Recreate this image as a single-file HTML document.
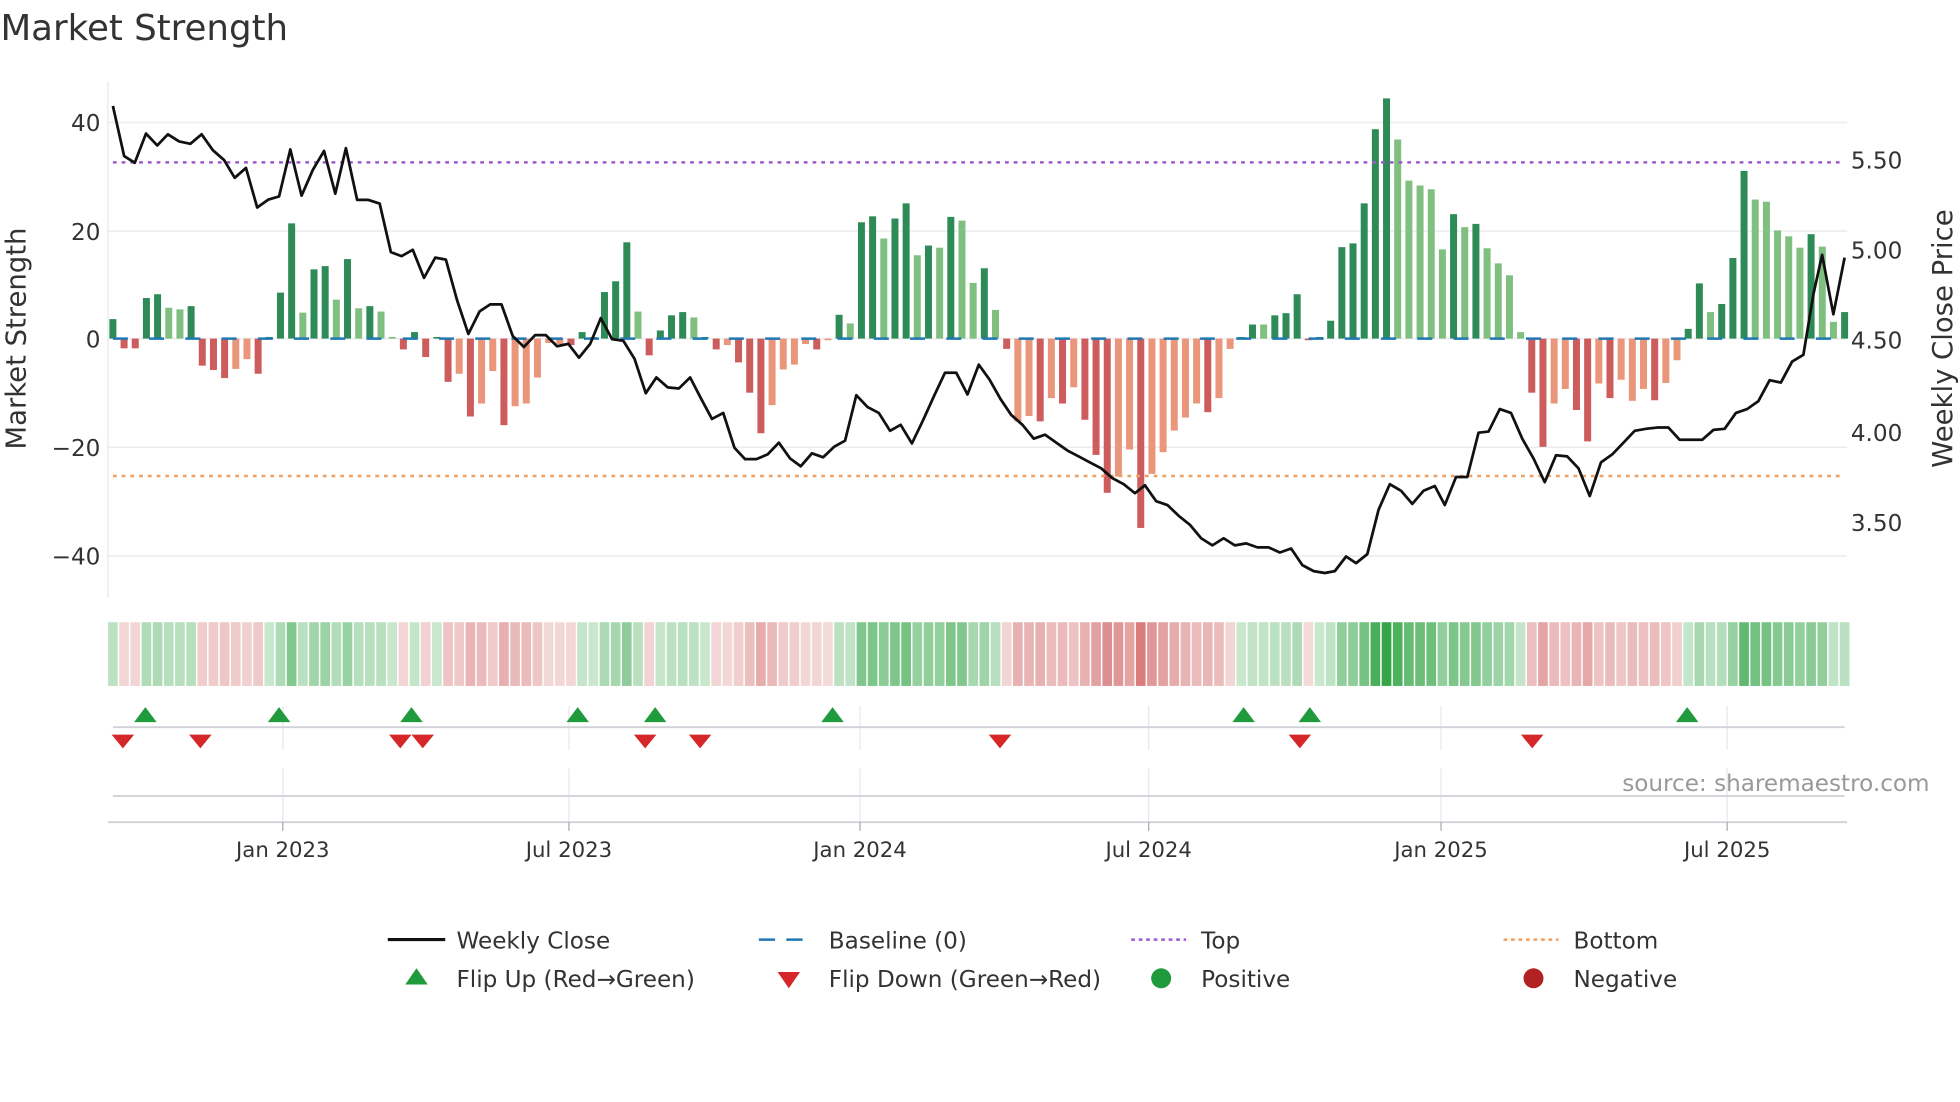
<!DOCTYPE html>
<html><head><meta charset="utf-8"><style>
html,body{margin:0;padding:0;background:#fff;width:1960px;height:1102px;overflow:hidden}
svg{display:block}
text{font-family:"DejaVu Sans","Liberation Sans",sans-serif;fill:#333}
</style></head><body>
<svg id="s" width="1960" height="1102" viewBox="0 0 1568 882" xmlns="http://www.w3.org/2000/svg">
<text x="0" y="32" font-size="28.5" fill="#333">Market Strength</text>
<g id="grid" stroke="#ececf0" stroke-width="1.2">
<line x1="86" x2="1478" y1="98" y2="98"/><line x1="86" x2="1478" y1="185" y2="185"/><line x1="86" x2="1478" y1="271" y2="271"/><line x1="86" x2="1478" y1="358" y2="358"/><line x1="86" x2="1478" y1="445" y2="445"/>
</g>
<line x1="86" x2="86" y1="65" y2="478" stroke="#ececf0" stroke-width="1.2"/>
<g font-size="18.5" text-anchor="end">
<text x="80" y="105">40</text><text x="80" y="192">20</text><text x="80" y="278">0</text><text x="80" y="365">−20</text><text x="80" y="452">−40</text>
</g>
<g font-size="18.5">
<text x="1481" y="135">5.50</text><text x="1481" y="207">5.00</text><text x="1481" y="279">4.50</text><text x="1481" y="353">4.00</text><text x="1481" y="425">3.50</text>
</g>
<text transform="translate(20,271) rotate(-90)" font-size="22" text-anchor="middle">Market Strength</text>
<text transform="translate(1562,271) rotate(-90)" font-size="22" text-anchor="middle">Weekly Close Price</text>
<g id="bars"></g>
<line x1="90" x2="1476" y1="271" y2="271" stroke="#1f77b4" stroke-width="2" stroke-dasharray="12,17"/>
<line x1="90" x2="1476" y1="130" y2="130" stroke="#9b59d0" stroke-width="2" stroke-dasharray="3,4"/>
<line x1="90" x2="1476" y1="381" y2="381" stroke="#f0a060" stroke-width="2" stroke-dasharray="3,4"/>
<polyline id="price" fill="none" stroke="#111" stroke-width="2.2" stroke-linejoin="round"/>
<g id="strip"></g>
<g stroke="#e6e8ee" stroke-width="1">
<line x1="226" x2="226" y1="565" y2="600"/><line x1="455" x2="455" y1="565" y2="600"/><line x1="688" x2="688" y1="565" y2="600"/><line x1="919" x2="919" y1="565" y2="600"/><line x1="1153" x2="1153" y1="565" y2="600"/><line x1="1382" x2="1382" y1="565" y2="600"/>
<line x1="226" x2="226" y1="615" y2="658"/><line x1="455" x2="455" y1="615" y2="658"/><line x1="688" x2="688" y1="615" y2="658"/><line x1="919" x2="919" y1="615" y2="658"/><line x1="1153" x2="1153" y1="615" y2="658"/><line x1="1382" x2="1382" y1="615" y2="658"/>
</g>
<line x1="90" x2="1476" y1="582" y2="582" stroke="#d0d2d8" stroke-width="1.5"/>
<line x1="90" x2="1476" y1="637" y2="637" stroke="#d0d2d8" stroke-width="1.5"/>
<line x1="86" x2="1478" y1="658" y2="658" stroke="#d0d2d8" stroke-width="1.5"/>
<g stroke="#aaa" stroke-width="1"><line x1="226" x2="226" y1="658" y2="665"/><line x1="455" x2="455" y1="658" y2="665"/><line x1="688" x2="688" y1="658" y2="665"/><line x1="919" x2="919" y1="658" y2="665"/><line x1="1153" x2="1153" y1="658" y2="665"/><line x1="1382" x2="1382" y1="658" y2="665"/></g>
<g id="tri"></g>
<text x="1544" y="633" font-size="18.5" text-anchor="end" style="fill:#999">source: sharemaestro.com</text>
<g font-size="17" text-anchor="middle">
<text x="226" y="686">Jan 2023</text><text x="455" y="686">Jul 2023</text><text x="688" y="686">Jan 2024</text><text x="919" y="686">Jul 2024</text><text x="1153" y="686">Jan 2025</text><text x="1382" y="686">Jul 2025</text>
</g>
<g font-size="18.5">
<line x1="310" x2="356" y1="752" y2="752" stroke="#111" stroke-width="2.5"/><text x="365" y="759">Weekly Close</text>
<line x1="607" x2="651" y1="752" y2="752" stroke="#1f77b4" stroke-width="2" stroke-dasharray="13,9"/><text x="663" y="759">Baseline (0)</text>
<line x1="905" x2="949" y1="752" y2="752" stroke="#9b59d0" stroke-width="2" stroke-dasharray="3,3"/><text x="961" y="759">Top</text>
<line x1="1203" x2="1247" y1="752" y2="752" stroke="#f0a060" stroke-width="2" stroke-dasharray="3,3"/><text x="1259" y="759">Bottom</text>
<polygon points="324,788 342,788 333,775" fill="#1f9a3c"/><text x="365" y="790">Flip Up (Red→Green)</text>
<polygon points="622,778 640,778 631,791" fill="#d62728"/><text x="663" y="790">Flip Down (Green→Red)</text>
<circle cx="929" cy="783" r="8" fill="#1f9a3c"/><text x="961" y="790">Positive</text>
<circle cx="1227" cy="783" r="8" fill="#b22222"/><text x="1259" y="790">Negative</text>
</g>
</svg>
<script>
var NS="http://www.w3.org/2000/svg";
var V=[[3.6,1],[-1.8,1],[-1.8,1],[7.5,1],[8.2,1],[5.7,0],[5.4,0],[6,1],[-5,1],[-5.8,1],[-7.3,1],[-5.6,0],[-3.8,0],[-6.5,1],[0.3,1],[8.5,1],[21.3,1],[4.8,0],[12.8,1],[13.4,1],[7.2,0],[14.7,1],[5.6,0],[6,1],[5,0],[0.3,0],[-2,1],[1.2,1],[-3.4,1],[0.3,1],[-8,1],[-6.5,0],[-14.4,1],[-12,0],[-6,0],[-16,1],[-12.5,0],[-12,0],[-7.2,0],[-0.8,0],[-1,0],[-1.2,1],[1.2,1],[0.3,1],[8.6,1],[10.6,1],[17.8,1],[5,0],[-3.1,1],[1.5,1],[4.3,1],[4.9,1],[3.9,0],[0.3,1],[-2,1],[-1.2,0],[-4.4,1],[-10,1],[-17.5,1],[-12.3,0],[-5.7,0],[-4.8,0],[-1,0],[-2,1],[-0.3,0],[4.4,1],[2.8,0],[21.5,1],[22.6,1],[18.5,0],[22.2,1],[25,1],[15.4,0],[17.2,1],[16.8,0],[22.5,1],[21.8,0],[10.3,0],[13,1],[5.3,0],
[-1.9,1],[-15.3,0],[-14.3,0],[-15.3,1],[-11,0],[-12,1],[-9,0],[-15,1],[-21.5,1],[-28.5,1],[-25.5,0],[-20.5,0],[-35,1],[-25,0],[-21,0],[-17,0],[-14.6,0],[-12,0],[-13.6,1],[-11,0],[-1.9,0],[0.3,1],[2.6,1],[2.6,0],[4.3,1],[4.7,1],[8.2,1],[-0.3,1],[0.3,1],[3.3,1],[16.9,1],[17.6,1],[25,1],[38.7,1],[44.4,1],[36.8,0],[29.2,0],[28.3,0],[27.6,0],[16.5,0],[23,1],[20.6,0],[21.2,1],[16.7,0],[13.9,0],[11.7,0],[1.2,0],[-10,1],[-20,1],[-12,0],[-9.3,0],[-13.2,1],[-19,1],[-8.3,0],[-11,1],[-7.6,0],[-11.5,0],[-9.3,0],[-11.4,1],[-8.2,0],[-4,0],[1.8,1],[10.2,1],[4.9,0],[6.4,1],[14.9,1],[31,1],[25.7,0],[25.3,0],[20,0],[18.9,0],[16.8,0],[19.3,1],[17,0],[3.1,0],[4.9,1]];
var N=V.length,x0=90,x1=1476,dx=(x1-x0)/(N-1);
var bars=document.getElementById('bars'),strip=document.getElementById('strip');
var sc=4.33,bw=5.6;
V.forEach(function(d,i){
 var v=d[0],x=x0+i*dx,r=document.createElementNS(NS,'rect');
 var h=Math.max(Math.abs(v)*sc,1.2),y=v>=0?271-h:271;
 r.setAttribute('x',x-bw/2);r.setAttribute('y',y);r.setAttribute('width',bw);r.setAttribute('height',h);
 r.setAttribute('fill',v>=0?(d[1]?'#2e8b57':'#7fbf7f'):(d[1]?'#cd5c5c':'#e9967a'));
 bars.appendChild(r);
 var s=document.createElementNS(NS,'rect'),a=Math.min(Math.abs(v)/45,1);
 s.setAttribute('x',x-dx/2+0.6);s.setAttribute('y',498);s.setAttribute('width',dx-1.2);s.setAttribute('height',51);
 var c=v>=0?'rgba(40,160,60,'+(0.25+0.7*a).toFixed(3)+')':'rgba(200,70,70,'+(0.2+0.65*a).toFixed(3)+')';
 s.setAttribute('fill',c);strip.appendChild(s);
});
var P1=[[180,268],[198,395],[215,412],[233,338],[251,368],[268,340],[286,358],[304,364],[322,340],[340,380],[358,405],[375,450],[393,425],[411,525],[429,505],[446,497],[464,378],[482,495],[500,430],[518,382],[536,490],[553,375],[571,506],[589,506],[607,515],[625,638],[642,648],[660,632],[678,703],[696,652],[713,657],[731,760],[749,845],[767,788],[784,770],[802,770],[820,850],[838,878],[856,848],[873,848],[891,876],[909,870],[926,905],[944,870],[961,805],[979,858],[997,862],[1015,908],[1033,995],[1050,955],[1068,980],[1086,983],[1104,955],[1122,1010],[1139,1060],[1157,1045],[1175,1133],[1192,1162],[1210,1162],[1228,1150],[1246,1120],[1264,1160],[1281,1180],[1299,1147],[1317,1157],[1335,1130],[1352,1115],[1370,1000],[1388,1030],[1406,1045],[1424,1090],[1441,1075],[1459,1122],[1477,1063],[1495,1000],[1512,943],[1530,943],[1548,998],[1566,923]];
var P2=[[15,960],[33,1010],[50,1050],[68,1075],[86,1110],[104,1100],[122,1120],[140,1140],[158,1155],[176,1170],[194,1185],[212,1210],[230,1225],[248,1248],[264,1228],[282,1268],[300,1278],[318,1305],[336,1328],[354,1362],[372,1380],[390,1362],[408,1380],[426,1375],[444,1385],[462,1385],[480,1398],[498,1388],[516,1430],[534,1445],[552,1450],[568,1445],[586,1408],[602,1425],[620,1402],[638,1290],[656,1225],[674,1242],[692,1275],[710,1242],[728,1230],[744,1278],[762,1207],[780,1207],[798,1095],[814,1092],[832,1035],[850,1045],[868,1110],[886,1160],[904,1220],[922,1152],[940,1155],[958,1185],[976,1255],[994,1170],[1012,1150],[1030,1120],[1048,1090],[1066,1085],[1084,1082],[1102,1082],[1120,1113],[1138,1113],[1156,1113],[1174,1088],[1192,1085],[1210,1045],[1228,1035],[1246,1015],[1264,962],[1282,968],[1300,915],[1318,898],[1334,745],[1348,645],[1366,795],[1384,652]];
var k=0.3163,pts=[];
P1.forEach(function(p){pts.push((p[0]/2).toFixed(1)+','+(p[1]*k).toFixed(1))});
P2.forEach(function(p){pts.push((784+p[0]/2).toFixed(1)+','+(p[1]*k).toFixed(1))});
document.getElementById('price').setAttribute('points',pts.join(' '));
var tri=document.getElementById('tri');
[116,223,329,462,524,666,995,1048,1350].forEach(function(x){var p=document.createElementNS(NS,'polygon');p.setAttribute('points',(x-9)+',578 '+(x+9)+',578 '+x+',566');p.setAttribute('fill','#1f9a3c');tri.appendChild(p);});
[98,160,320,338,516,560,800,1040,1226].forEach(function(x){var p=document.createElementNS(NS,'polygon');p.setAttribute('points',(x-9)+',588 '+(x+9)+',588 '+x+',599');p.setAttribute('fill','#d62728');tri.appendChild(p);});
</script>
</body></html>
